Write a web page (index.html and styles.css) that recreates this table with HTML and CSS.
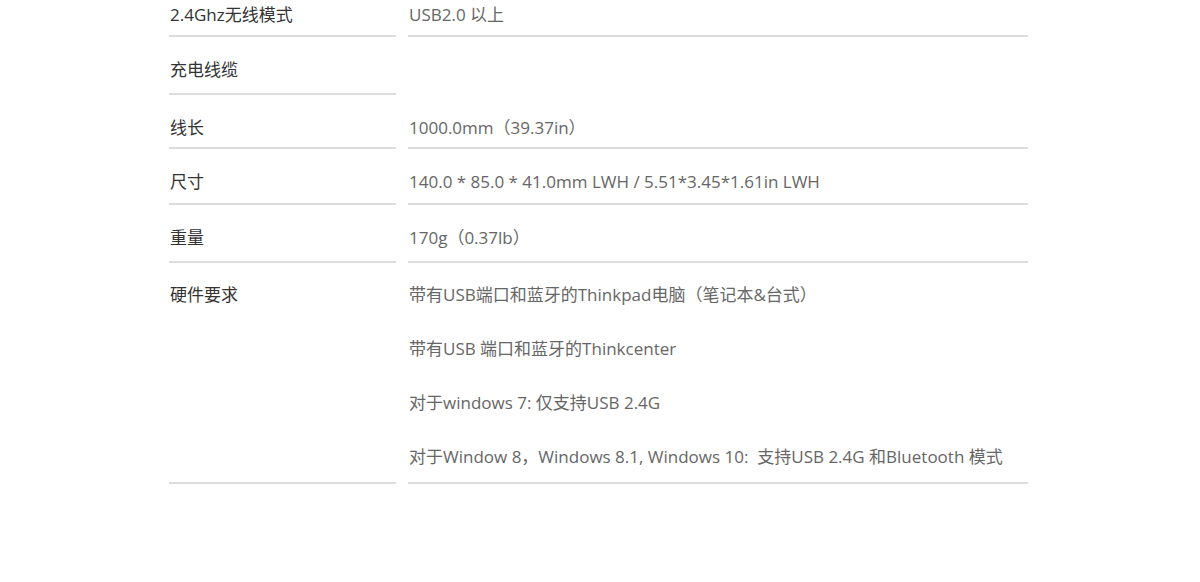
FILE: index.html
```html
<!DOCTYPE html>
<html lang="zh-CN">
<head>
    <meta charset="UTF-8">
    <meta name="viewport" content="width=device-width, initial-scale=1.0">
    <title>规格参数</title>
    <link rel="stylesheet" href="styles.css">
</head>
<body>
    <div class="specs">
        <div class="row first">
            <div class="name">2.4Ghz无线模式</div>
            <div class="value">USB2.0 以上</div>
        </div>
        <div class="row tall">
            <div class="name">充电线缆</div>
            <div class="value empty"></div>
        </div>
        <div class="row short">
            <div class="name">线长</div>
            <div class="value">1000.0mm（39.37in）</div>
        </div>
        <div class="row">
            <div class="name">尺寸</div>
            <div class="value">140.0 * 85.0 * 41.0mm LWH / 5.51*3.45*1.61in LWH</div>
        </div>
        <div class="row tall">
            <div class="name">重量</div>
            <div class="value">170g（0.37lb）</div>
        </div>
        <div class="row last">
            <div class="name">硬件要求</div>
            <div class="value">
                <p>带有USB端口和蓝牙的Thinkpad电脑（笔记本&amp;台式）</p>
                <p>带有USB 端口和蓝牙的Thinkcenter</p>
                <p>对于windows 7: 仅支持USB 2.4G</p>
                <p>对于Window 8，Windows 8.1, Windows 10:&nbsp; 支持USB 2.4G 和Bluetooth 模式</p>
            </div>
        </div>
    </div>
</body>
</html>
```

FILE: styles.css
```css
body {
    margin: 0;
    background-color: #fff;
    font-family: "Open Sans", "Noto Sans CJK SC", sans-serif;
    font-size: 17px;
    line-height: 20px;
}
.specs {
    width: 859px;
    margin: -17px 0 0 169px;
}
.row {
    display: flex;
    gap: 12px;
}
.name, .value {
    padding: 23px 0 11px 1px;
    border-bottom: 2px solid #ddd;
}
.name {
    width: 226px;
    color: #333;
}
.value {
    flex: 1;
    color: #666;
}
.value.empty {
    border-bottom: none;
}
.row.first .name, .row.first .value {
    padding-top: 22px;
    padding-bottom: 10px;
}
.row.tall .name, .row.tall .value {
    padding-bottom: 13px;
}
.row.short .name, .row.short .value {
    padding-bottom: 9px;
}
.row.last .name, .row.last .value {
    padding-top: 22px;
    padding-bottom: 15px;
}
.value p {
    margin: 0 0 34px;
}
.value p:last-child {
    margin-bottom: 0;
}
```
